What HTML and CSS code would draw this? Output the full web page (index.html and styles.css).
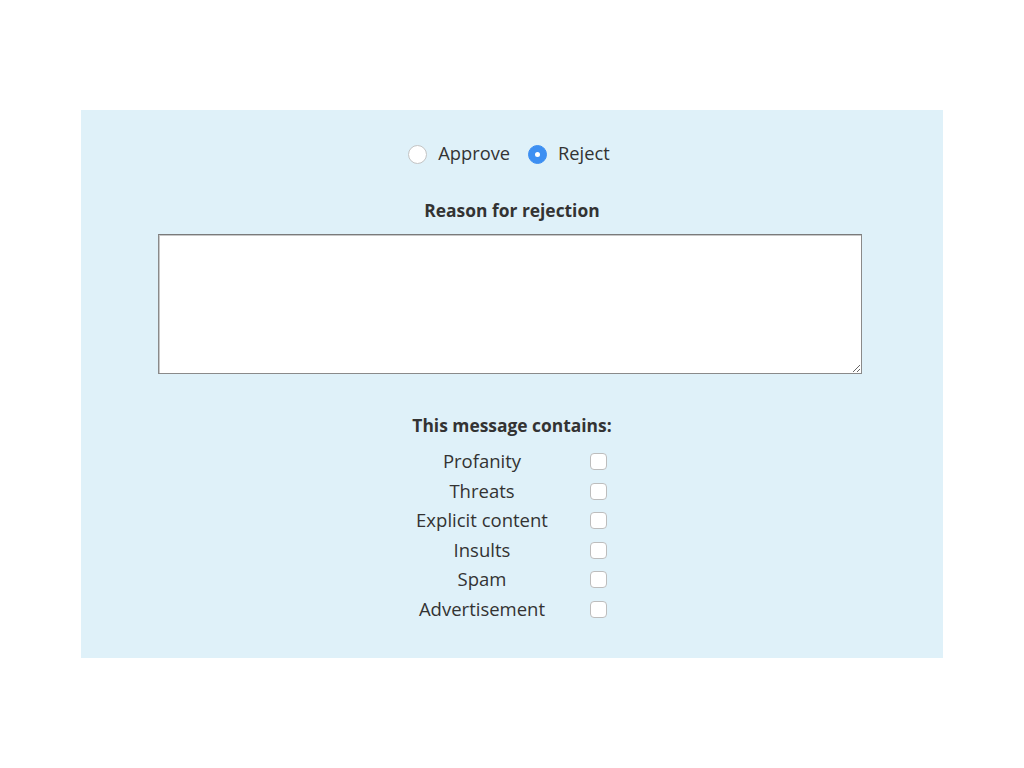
FILE: index.html
```html
<!DOCTYPE html>
<html>
<head>
<meta charset="utf-8">
<link rel="stylesheet" href="styles.css">
</head>
<body>
<div class="page">
  <form class="panel">
    <div class="choice">
      <label class="opt"><input type="radio" name="d" class="radio"> Approve</label>
      <label class="opt"><input type="radio" name="d" class="radio" checked> Reject</label>
    </div>
    <div class="heading">Reason for rejection</div>
    <textarea class="reason"></textarea>
    <div class="heading contains">This message contains:</div>
    <div class="flags">
      <span class="flag">Profanity</span><input type="checkbox" class="check">
      <span class="flag">Threats</span><input type="checkbox" class="check">
      <span class="flag">Explicit content</span><input type="checkbox" class="check">
      <span class="flag">Insults</span><input type="checkbox" class="check">
      <span class="flag">Spam</span><input type="checkbox" class="check">
      <span class="flag">Advertisement</span><input type="checkbox" class="check">
    </div>
  </form>
</div>
</body>
</html>
```
FILE: styles.css
```css
html, body { margin: 0; background: #fff; }
body { font-family: "Open Sans", "Noto Sans", sans-serif; color: #333; }
.page { padding: 110px 81px 0 81px; }
.panel {
  background: #dff1f9;
  height: 548px;
  box-sizing: border-box;
  padding-top: 33px;
  display: flex;
  flex-direction: column;
  align-items: center;
}
.choice { display: flex; gap: 18px; font-size: 18.3px; line-height: 20px; height: 20px; margin-right: 6px; }
.opt { display: flex; align-items: center; gap: 11px; }
.radio {
  appearance: none; -webkit-appearance: none;
  margin: 0; width: 19px; height: 19px; border-radius: 50%;
  background: #fff; border: 1px solid #c4c4c4; box-sizing: border-box;
  position: relative; top: 1px;
}
.radio:checked { background: #3d8ff2; border-color: #3d8ff2; }
.radio:checked::after {
  content: ""; position: absolute; left: 6px; top: 6px;
  width: 5px; height: 5px; border-radius: 50%; background: #fff;
}
.heading { font-weight: 700; font-size: 17.4px; line-height: 20px; margin-top: 37px; color: #333; }
.reason {
  margin: 14px 4px 0 0; width: 704px; height: 140px; box-sizing: border-box;
  border: 1px solid #8a8a8a; border-top-color: #7a7a7a; background: #fff;
  box-shadow: inset 1px 1px 0 #c8c8c8; resize: both; font: inherit;
}
.contains { margin-top: 41px; }
.flags {
  margin-top: 11px;
  display: grid;
  grid-template-columns: 140px 80px;
  grid-auto-rows: 29.5px;
  align-items: center;
  margin-left: 20px;
  font-size: 18.5px;
}
.flag { text-align: center; }
.check {
  appearance: none; -webkit-appearance: none;
  margin: 2px 0 0 38px; width: 17px; height: 17px; border-radius: 4px;
  background: #fff; border: 1px solid #bdbdbd; box-sizing: border-box;
}
```
